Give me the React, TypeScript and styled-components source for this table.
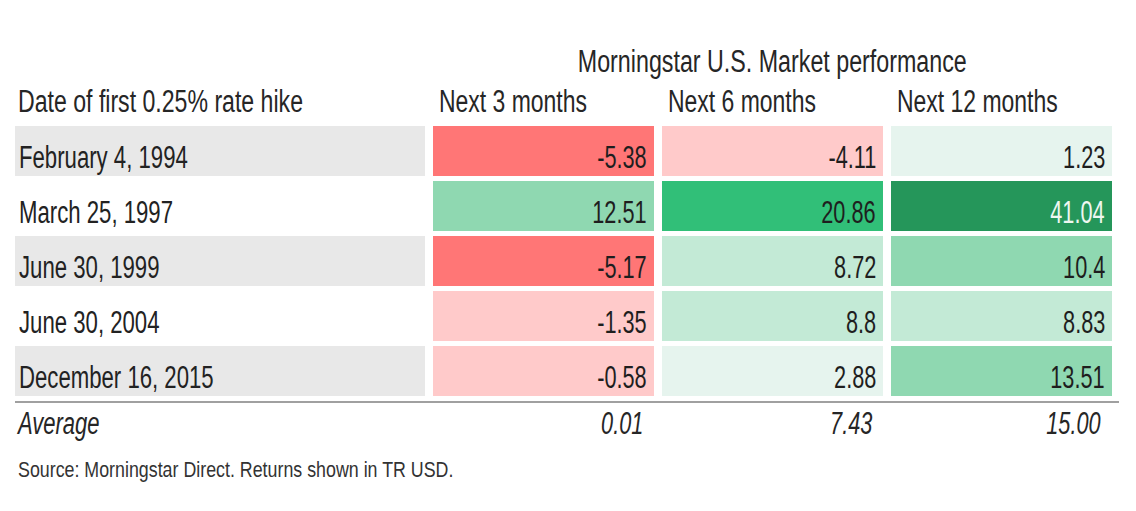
import styled, { createGlobalStyle } from "styled-components";

const GlobalStyle = createGlobalStyle`
  body {
    margin: 0;
    background: #ffffff;
    color: #222222;
    font-family: "Liberation Sans", Arial, sans-serif;
  }
`;

const tones = {
  red: "#ff7676",
  pink: "#ffcaca",
  mint: "#e6f4ee",
  pale: "#c3ead6",
  mid: "#8fd8b1",
  bright: "#31bf78",
  dark: "#25965a",
};

type Tone = keyof typeof tones;

type Cell = { value: string; tone: Tone };

const rows: { date: string; cells: Cell[] }[] = [
  {
    date: "February 4, 1994",
    cells: [
      { value: "-5.38", tone: "red" },
      { value: "-4.11", tone: "pink" },
      { value: "1.23", tone: "mint" },
    ],
  },
  {
    date: "March 25, 1997",
    cells: [
      { value: "12.51", tone: "mid" },
      { value: "20.86", tone: "bright" },
      { value: "41.04", tone: "dark" },
    ],
  },
  {
    date: "June 30, 1999",
    cells: [
      { value: "-5.17", tone: "red" },
      { value: "8.72", tone: "pale" },
      { value: "10.4", tone: "mid" },
    ],
  },
  {
    date: "June 30, 2004",
    cells: [
      { value: "-1.35", tone: "pink" },
      { value: "8.8", tone: "pale" },
      { value: "8.83", tone: "pale" },
    ],
  },
  {
    date: "December 16, 2015",
    cells: [
      { value: "-0.58", tone: "pink" },
      { value: "2.88", tone: "mint" },
      { value: "13.51", tone: "mid" },
    ],
  },
];

const averages = ["0.01", "7.43", "15.00"];

const Page = styled.div`
  padding: 44px 0 0 15px;
  width: 1097px;
`;

const Grid = styled.div`
  display: grid;
  grid-template-columns: 410px repeat(3, 221px);
  column-gap: 8px;
  font-size: 31px;
  line-height: 36px;
`;

// condensed look: the reference face is narrower than anything installed
const Squeeze = styled.span<{ $origin?: string; $k?: number }>`
  display: inline-block;
  white-space: nowrap;
  transform: scaleX(${(p) => p.$k ?? 0.73});
  transform-origin: ${(p) => p.$origin ?? "left"} center;
`;

const TitleRow = styled(Grid)`
  margin-bottom: 4px;
`;

const Title = styled.div`
  grid-column: 2 / 5;
  text-align: center;
  color: #262626;
`;

const HeadRow = styled(Grid)`
  margin-bottom: 6px;
  color: #262626;
`;

const HeadCell = styled.div<{ $first?: boolean }>`
  padding-left: ${(p) => (p.$first ? 3 : 6)}px;
`;

const Body = styled.div`
  display: flex;
  flex-direction: column;
  gap: 5px;
`;

const Row = styled(Grid)`
  height: 50px;
`;

const DateCell = styled.div<{ $shaded: boolean }>`
  background: ${(p) => (p.$shaded ? "#e8e8e8" : "#ffffff")};
  padding: 14px 0 0 4px;
`;

const ValueCell = styled.div<{ $tone: Tone }>`
  background: ${(p) => tones[p.$tone]};
  color: ${(p) => (p.$tone === "dark" ? "#eef7f1" : "#1e1e1e")};
  text-align: right;
  padding: 14px 7px 0 0;
`;

const Divider = styled.div`
  height: 2px;
  width: 1104px;
  margin-top: 5px;
  background: #a0a0a0;
`;

const AvgRow = styled(Grid)`
  margin-top: 3px;
  font-style: italic;
  color: #262626;
`;

const AvgLabel = styled.div`
  padding-left: 3px;
`;

const AvgValue = styled.div`
  text-align: right;
  padding-right: 11px;
`;

const Source = styled.div`
  margin-top: 15px;
  padding-left: 3px;
  font-size: 22px;
  line-height: 26px;
  color: #333333;
`;

const App = () => {
  return (
    <Page>
      <GlobalStyle />
      <TitleRow>
        <Title>
          <Squeeze $origin="center" $k={0.75}>
            Morningstar U.S. Market performance
          </Squeeze>
        </Title>
      </TitleRow>
      <HeadRow>
        <HeadCell $first>
          <Squeeze $k={0.745}>Date of first 0.25% rate hike</Squeeze>
        </HeadCell>
        <HeadCell>
          <Squeeze $k={0.74}>Next 3 months</Squeeze>
        </HeadCell>
        <HeadCell>
          <Squeeze $k={0.74}>Next 6 months</Squeeze>
        </HeadCell>
        <HeadCell>
          <Squeeze $k={0.74}>Next 12 months</Squeeze>
        </HeadCell>
      </HeadRow>
      <Body>
        {rows.map((row, i) => (
          <Row key={row.date}>
            <DateCell $shaded={i % 2 === 0}>
              <Squeeze $k={0.715}>{row.date}</Squeeze>
            </DateCell>
            {row.cells.map((cell, j) => (
              <ValueCell key={j} $tone={cell.tone}>
                <Squeeze $origin="right" $k={0.7}>
                  {cell.value}
                </Squeeze>
              </ValueCell>
            ))}
          </Row>
        ))}
      </Body>
      <Divider />
      <AvgRow>
        <AvgLabel>
          <Squeeze $k={0.71}>Average</Squeeze>
        </AvgLabel>
        {averages.map((v) => (
          <AvgValue key={v}>
            <Squeeze $origin="right" $k={0.7}>
              {v}
            </Squeeze>
          </AvgValue>
        ))}
      </AvgRow>
      <Source>
        <Squeeze $k={0.81}>
          Source: Morningstar Direct. Returns shown in TR USD.
        </Squeeze>
      </Source>
    </Page>
  );
};

export default App;
